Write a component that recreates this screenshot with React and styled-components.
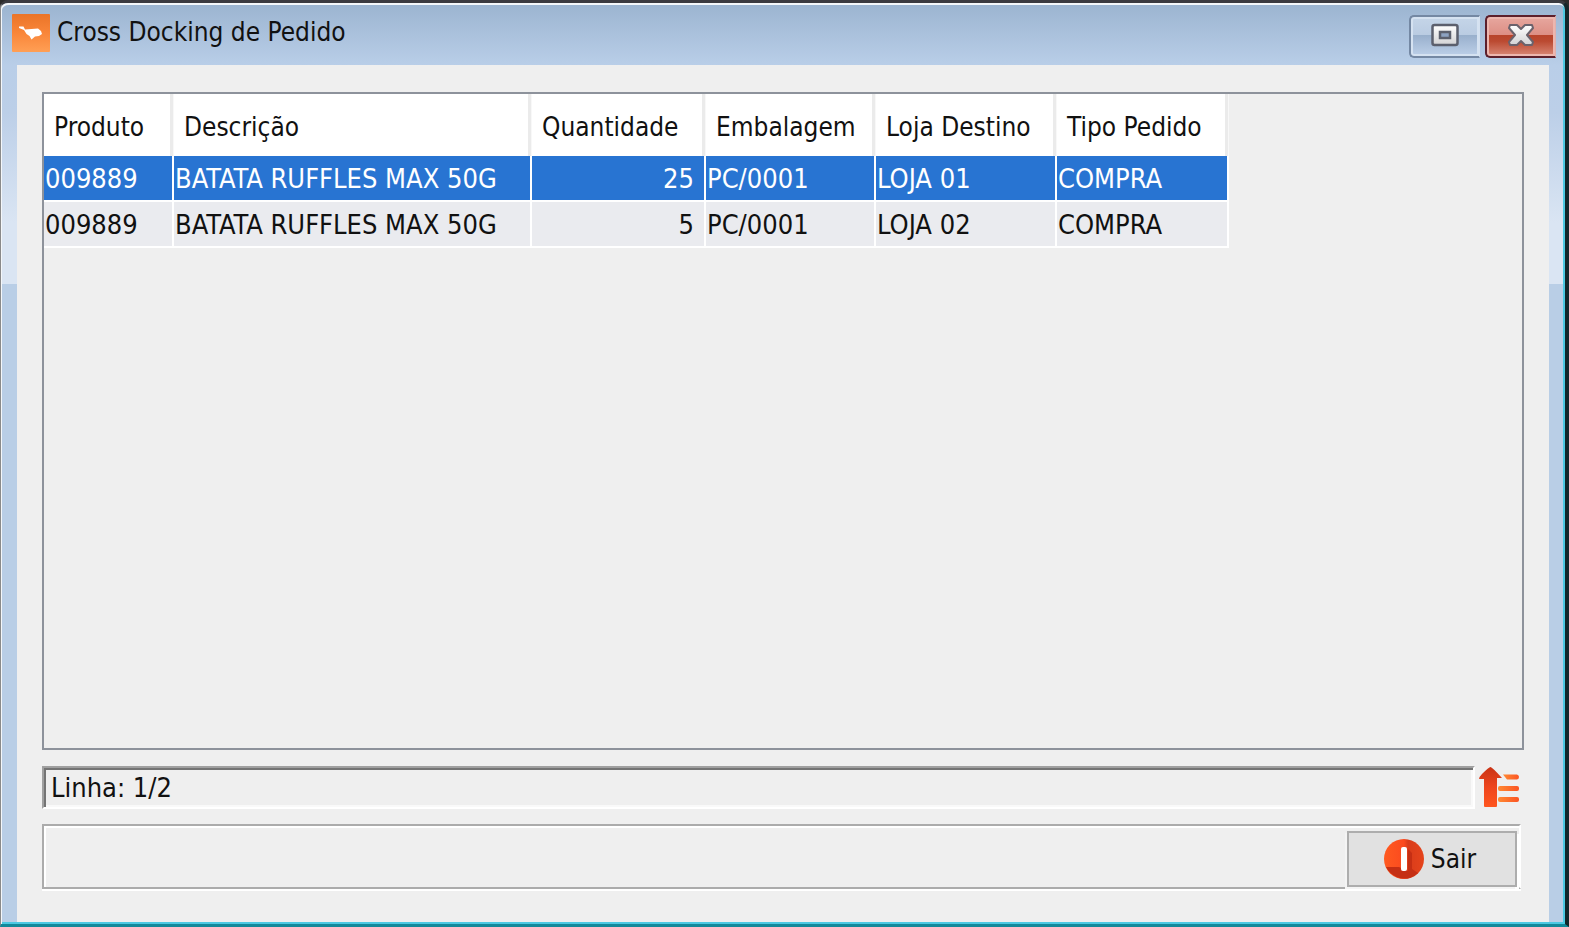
import React, {useState} from 'react';
import styled, {createGlobalStyle} from 'styled-components';

const GlobalStyle = createGlobalStyle`
  * {
    box-sizing: border-box;
  }

  body {
    margin: 0;
    background: #2b2b2b;
    color: #111111;
    font-family: "DejaVu Sans Condensed", "DejaVu Sans", sans-serif;
    font-stretch: condensed;
    font-size: 26px;
    line-height: 34px;
  }
`;

const Window = styled.main`
  display: flex;
  flex-direction: column;
  min-height: 100vh;
  border: solid;
  border-width: 3px 4px 3px 1px;
  border-color: #3b3b40 #12272b #12899a #8a8a8a;
  border-radius: 8px 10px 0 0;
  background: linear-gradient(#9bb4d0 0, #b9cee8 62px, #bccfe8 110px, #dae5f3 220px, #dae5f3 281px, #b9cee6 281px);
  box-shadow: inset 1px 2px 0 #f4f7fa, inset -2px -2px 0 #4cc9e2;
`;

const TitleBar = styled.header`
  display: flex;
  align-items: flex-start;
  gap: 7px;
  height: 62px;
  padding: 11px 9px 0 11px;

  h1 {
    flex: 1;
    margin: 0;
    font-size: 26px;
    font-weight: normal;
    line-height: 36px;
  }
`;

const Controls = styled.div`
  display: flex;
  gap: 5px;
`;

const ControlButton = styled.button`
  display: flex;
  align-items: center;
  justify-content: center;
  width: 71px;
  height: 43px;
  margin-top: 1px;
  padding: 0 0 4px;
  border: 2px solid ${(props) => (props.$danger ? '#5c1f2b' : '#7488a3')};
  border-right: 1px solid ${(props) => (props.$danger ? '#e0b0ac' : '#d5e1ef')};
  border-radius: 5px 0 0 5px;
  background: ${(props) => (props.$danger
      ? 'linear-gradient(#e7a79f 0, #dd8f85 45%, #b8432b 46%, #bb4a31 62%, #d98877 100%)'
      : 'linear-gradient(#c5d5e8 0, #bacce2 45%, #98afcb 46%, #a3b9d5 62%, #bdd0e8 100%)')};
  box-shadow: inset 0 0 0 2px ${(props) => (props.$danger ? '#edb6ae' : '#d5e2f1')};
`;

const Content = styled.section`
  display: flex;
  flex: 1;
  flex-direction: column;
  margin: 0 16px 2px;
  padding: 27px 25px 33px;
  background: #efefef;
`;

const GridPanel = styled.div`
  flex: 1;
  border: 2px solid #8d929b;
  background: #efefef;
`;

const Grid = styled.table`
  width: 1185px;
  table-layout: fixed;
  border-collapse: separate;
  border-spacing: 0;

  th {
    height: 62px;
    padding: 4px 0 0 10px;
    background: #ffffff;
    border-right: 1px solid #f8f8f8;
    box-shadow: inset -3px 0 0 #ebebeb;
    font-weight: normal;
    text-align: left;
    white-space: nowrap;
  }

  td {
    height: 46px;
    padding: 2px 0 0 1px;
    border-right: 2px solid #ffffff;
    border-bottom: 2px solid #ffffff;
    font-size: 27px;
    white-space: nowrap;
  }
`;

const Row = styled.tr`
  background: ${(props) => (props.$selected ? '#2874d2' : '#eaebef')};
  color: ${(props) => (props.$selected ? '#ffffff' : '#111111')};
`;

const Cell = styled.td`
  && {
    text-align: ${(props) => (props.$right ? 'right' : 'left')};
    padding-right: ${(props) => (props.$right ? '10px' : '0')};
  }
`;

const StatusRow = styled.div`
  display: flex;
  gap: 4px;
  margin: 16px 4px 0 0;
`;

const StatusBox = styled.div`
  flex: 1;
  height: 43px;
  padding: 3px 7px;
  border: 2px solid;
  border-color: #a0a0a0 #ffffff #ffffff #a0a0a0;
  box-shadow: inset 2px 2px 0 #747474, inset -2px -2px 0 #f9f9f9;
  font-size: 27px;
`;

const IconButton = styled.button`
  width: 41px;
  height: 42px;
  padding: 0;
  border: 0;
  background: none;
`;

const Footer = styled.footer`
  display: flex;
  justify-content: flex-end;
  height: 65px;
  margin: 15px 3px 0 0;
  padding: 5px 2px 0 0;
  border: 2px solid;
  border-color: #ababab #ffffff #ababab #ababab;
  box-shadow: inset 2px 2px 0 #ffffff, 0 2px 0 #ffffff;
`;

const ExitButton = styled.button`
  display: flex;
  align-items: center;
  justify-content: center;
  gap: 7px;
  width: 170px;
  height: 56px;
  padding: 0 4px 0 0;
  border: 2px solid #adadad;
  background: #e1e1e1;
  box-shadow: -2px 2px 0 #f4f4f4, 2px 3px 0 #ffffff;
  color: #111111;
  font: inherit;
`;

const columns = [
    {key: 'produto', title: 'Produto', width: 130},
    {key: 'descricao', title: 'Descrição', width: 358},
    {key: 'quantidade', title: 'Quantidade', width: 174, right: true},
    {key: 'embalagem', title: 'Embalagem', width: 170},
    {key: 'loja', title: 'Loja Destino', width: 181},
    {key: 'tipo', title: 'Tipo Pedido', width: 172}
];

const pedidos = [
    {produto: '009889', descricao: 'BATATA RUFFLES MAX 50G', quantidade: 25, embalagem: 'PC/0001', loja: 'LOJA 01', tipo: 'COMPRA'},
    {produto: '009889', descricao: 'BATATA RUFFLES MAX 50G', quantidade: 5, embalagem: 'PC/0001', loja: 'LOJA 02', tipo: 'COMPRA'}
];

const AppIcon = () => (
    <svg width="38" height="38" viewBox="0 0 38 38" aria-hidden="true">
        <defs>
            <linearGradient id="app-bg" x1="0" y1="0" x2="0" y2="1">
                <stop offset="0" stopColor="#ea7428"/>
                <stop offset="0.5" stopColor="#f98639"/>
                <stop offset="1" stopColor="#ff9f55"/>
            </linearGradient>
        </defs>
        <rect width="38" height="38" rx="1" fill="url(#app-bg)"/>
        <path d="M7 12.500 H11.500 L13 15.500 L26 14.500 L29 17 L30 20 L27 22 L23 22.500 L19.500 25.500 L17.500 22 L14.500 20 L12 16 L7 14 Z" fill="#fff"/>
    </svg>
);

const MaximizeIcon = () => (
    <svg width="28" height="24" viewBox="0 0 28 24" aria-hidden="true">
        <defs>
            <linearGradient id="glyph" x1="0" y1="0" x2="0" y2="1">
                <stop offset="0" stopColor="#ffffff"/>
                <stop offset="1" stopColor="#d2d2d4"/>
            </linearGradient>
        </defs>
        <rect x="1.500" y="2" width="25" height="20" rx="2" fill="url(#glyph)" stroke="#5b5f6d" strokeWidth="2.500"/>
        <rect x="9" y="9" width="10" height="6" fill="#8da2c2" stroke="#5b5f6d" strokeWidth="2.500"/>
    </svg>
);

const CloseIcon = () => (
    <svg width="28" height="24" viewBox="0 0 28 24" aria-hidden="true">
        <path
            d="M3 2 H10 L14 6 L18 2 H25 L26 5 L20 12 L26 19 L25 22 H18 L14 18 L10 22 H3 L2 19 L8 12 L2 5 Z"
            fill="url(#glyph)" stroke="#6b626c" strokeWidth="2" strokeLinejoin="round"
        />
    </svg>
);

const ArrowListIcon = () => (
    <svg width="41" height="42" viewBox="0 0 41 42" aria-hidden="true">
        <defs>
            <linearGradient id="arrow" x1="0" y1="0" x2="0" y2="1">
                <stop offset="0" stopColor="#c93315"/>
                <stop offset="0.500" stopColor="#ee451d"/>
                <stop offset="1" stopColor="#ff561f"/>
            </linearGradient>
            <linearGradient id="line" x1="0" y1="0" x2="1" y2="0">
                <stop offset="0" stopColor="#ff8a33"/>
                <stop offset="1" stopColor="#fb5424"/>
            </linearGradient>
        </defs>
        <path d="M11.500 1 Q13 1 23 12 H18 V40 Q18 41 17 41 H6 Q5 41 5 40 V13 H0 Q0 11 3 8 Q10 1 11.500 1 Z" fill="url(#arrow)"/>
        <path d="M24 8.500 H38 Q40 9 40 11 Q40 13 38 13.500 H28 Z" fill="url(#line)"/>
        <rect x="19" y="20" width="21" height="5" rx="2" fill="url(#line)"/>
        <rect x="19" y="31" width="21" height="5" rx="2" fill="url(#line)"/>
    </svg>
);

const ExitIcon = () => (
    <svg width="40" height="40" viewBox="0 0 40 40" aria-hidden="true">
        <defs>
            <linearGradient id="exit" x1="0" y1="0" x2="1" y2="0">
                <stop offset="0" stopColor="#ff5a20"/>
                <stop offset="0.500" stopColor="#fb4a1e"/>
                <stop offset="0.600" stopColor="#d93c1a"/>
                <stop offset="1" stopColor="#e5441c"/>
            </linearGradient>
        </defs>
        <circle cx="20" cy="20" r="20" fill="url(#exit)"/>
        <path d="M2 28 H15 L24 32 V10 L28 14 V30 L34 34 A20 20 0 0 1 2 28 Z" fill="#c52f14"/>
        <rect x="17" y="8" width="6" height="24" rx="2" fill="#fff"/>
    </svg>
);

const App = () => {

    const [selected, setSelected] = useState(0);

    return (
        <>
            <GlobalStyle/>
            <Window>
                <TitleBar>
                    <AppIcon/>
                    <h1>Cross Docking de Pedido</h1>
                    <Controls>
                        <ControlButton type="button" aria-label="Maximizar"><MaximizeIcon/></ControlButton>
                        <ControlButton type="button" aria-label="Fechar" $danger><CloseIcon/></ControlButton>
                    </Controls>
                </TitleBar>
                <Content>
                    <GridPanel>
                        <Grid>
                            <colgroup>
                                {columns.map((col) => <col key={col.key} style={{width: col.width}}/>)}
                            </colgroup>
                            <thead>
                                <tr>
                                    {columns.map((col) => <th key={col.key} scope="col">{col.title}</th>)}
                                </tr>
                            </thead>
                            <tbody>
                                {pedidos.map((pedido, i) => (
                                    <Row key={i} $selected={i === selected} onClick={() => setSelected(i)}>
                                        {columns.map((col) => (
                                            <Cell key={col.key} $right={col.right}>{pedido[col.key]}</Cell>
                                        ))}
                                    </Row>
                                ))}
                            </tbody>
                        </Grid>
                    </GridPanel>
                    <StatusRow>
                        <StatusBox>Linha: {selected + 1}/{pedidos.length}</StatusBox>
                        <IconButton type="button" aria-label="Ir para o topo"><ArrowListIcon/></IconButton>
                    </StatusRow>
                    <Footer>
                        <ExitButton type="button">
                            <ExitIcon/>
                            Sair
                        </ExitButton>
                    </Footer>
                </Content>
            </Window>
        </>
    );
};

export default App;
